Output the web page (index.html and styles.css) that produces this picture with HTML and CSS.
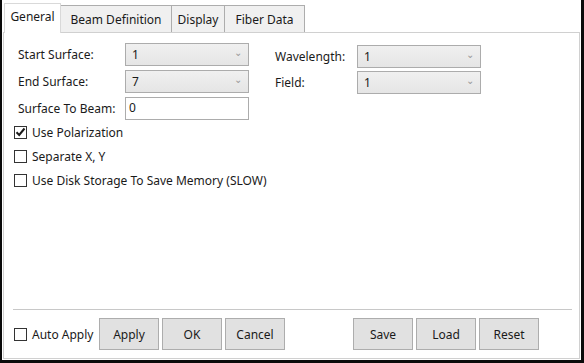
FILE: index.html
```html
<!DOCTYPE html>
<html lang="en">
<head>
<meta charset="utf-8">
<title>Beam Settings</title>
<link rel="stylesheet" href="styles.css">
</head>
<body>
<div class="window">
	<div class="tabs">
		<div class="tab active">General</div>
		<div class="tab beam">Beam Definition</div>
		<div class="tab display">Display</div>
		<div class="tab fiber">Fiber Data</div>
	</div>
	<div class="panel">
		<div class="form">
			<div class="grid">
				<div class="col left">
					<div class="row">
						<span class="label">Start Surface:</span>
						<div class="select"><span>1</span><span class="chev">&#8964;</span></div>
					</div>
					<div class="row">
						<span class="label">End Surface:</span>
						<div class="select"><span>7</span><span class="chev">&#8964;</span></div>
					</div>
					<div class="row">
						<span class="label">Surface To Beam:</span>
						<div class="textbox">0</div>
					</div>
				</div>
				<div class="col right">
					<div class="row">
						<span class="label short">Wavelength:</span>
						<div class="select"><span>1</span><span class="chev">&#8964;</span></div>
					</div>
					<div class="row">
						<span class="label short">Field:</span>
						<div class="select"><span>1</span><span class="chev">&#8964;</span></div>
					</div>
				</div>
			</div>
			<div class="checks">
				<label class="check"><span class="box"><svg width="11" height="10" viewBox="0 0 11 10"><path d="M1.5 5.2 L4.2 8 L9.5 1.5" fill="none" stroke="#1a1a1a" stroke-width="2"/></svg></span>Use Polarization</label>
				<label class="check"><span class="box"></span>Separate X, Y</label>
				<label class="check"><span class="box"></span>Use Disk Storage To Save Memory (SLOW)</label>
			</div>
		</div>
		<div class="footer">
			<label class="check auto"><span class="box"></span>Auto Apply</label>
			<div class="btn">Apply</div>
			<div class="btn">OK</div>
			<div class="btn">Cancel</div>
			<div class="btn push">Save</div>
			<div class="btn">Load</div>
			<div class="btn">Reset</div>
		</div>
	</div>
</div>
</body>
</html>
```
FILE: styles.css
```css
* {
	box-sizing: border-box;
}

body {
	margin: 0;
	background: #ffffff;
	font-family: "Noto Sans", "Open Sans", sans-serif;
	font-size: 12px;
	color: #1a1a1a;
}

.window {
	width: 584px;
	height: 363px;
	border-left: 2px solid #0a0a0a;
	border-right: 3px solid #0a0a0a;
	border-bottom: 3px solid #0a0a0a;
	background: #ffffff;
	display: flex;
	flex-direction: column;
}

.tabs {
	display: flex;
	align-items: flex-end;
	height: 32px;
	padding-left: 2px;
}

.tab {
	height: 27px;
	display: flex;
	align-items: center;
	justify-content: center;
	background: #f0f0f0;
	border: 1px solid #adadad;
	border-left: none;
	border-bottom: none;
}

.tab.beam {
	width: 111px;
}

.tab.display {
	width: 53px;
}

.tab.fiber {
	width: 80px;
}

.tab.active {
	width: 57px;
	height: 30px;
	background: #ffffff;
	border: 1px solid #d9d9d9;
	border-bottom: none;
	margin-bottom: -1px;
	padding-bottom: 5px;
	position: relative;
	z-index: 1;
}

.panel {
	flex: 1;
	margin: 0 1px 1px 1px;
	border: 1px solid #d0d0d0;
	display: flex;
	flex-direction: column;
	justify-content: space-between;
}

.form {
	padding: 10px 0 0 10px;
}

.grid {
	display: grid;
	grid-template-columns: 261px 240px;
}

.col {
	display: flex;
	flex-direction: column;
	gap: 4px;
}

.col.right {
	padding-top: 2px;
	gap: 3px;
}

.row {
	display: flex;
	align-items: center;
	height: 23px;
}

.label {
	width: 111px;
	padding-left: 4px;
}

.label.short {
	width: 82px;
	padding-left: 0;
}

.select {
	width: 124px;
	height: 23px;
	border: 1px solid #acacac;
	background: linear-gradient(#f0f0f0, #e5e5e5);
	display: flex;
	justify-content: space-between;
	align-items: center;
	padding: 0 6px 0 6px;
}

.chev {
	color: #999999;
	font-size: 10px;
	line-height: 1;
	margin-top: -6px;
}

.textbox {
	width: 124px;
	height: 23px;
	border: 1px solid #acacac;
	background: #ffffff;
	padding: 1px 0 0 3px;
}

.checks {
	display: flex;
	flex-direction: column;
	gap: 6px;
	margin-top: 3px;
}

.check {
	display: flex;
	align-items: center;
	height: 18px;
	gap: 5px;
}

.box {
	width: 13px;
	height: 13px;
	border: 1px solid #333333;
	background: #ffffff;
	display: flex;
	align-items: center;
	justify-content: center;
}

.footer {
	margin: 0 7px 0 9px;
	border-top: 1px solid #c8c8c8;
	padding: 8px 0 8px 1px;
	display: flex;
	align-items: center;
	gap: 3px;
}

.check.auto {
	width: 82px;
}

.btn {
	width: 60px;
	height: 32px;
	background: #e1e1e1;
	border: 1px solid #adadad;
	display: flex;
	align-items: center;
	justify-content: center;
}

.btn.push {
	margin-left: 65px;
}
```
